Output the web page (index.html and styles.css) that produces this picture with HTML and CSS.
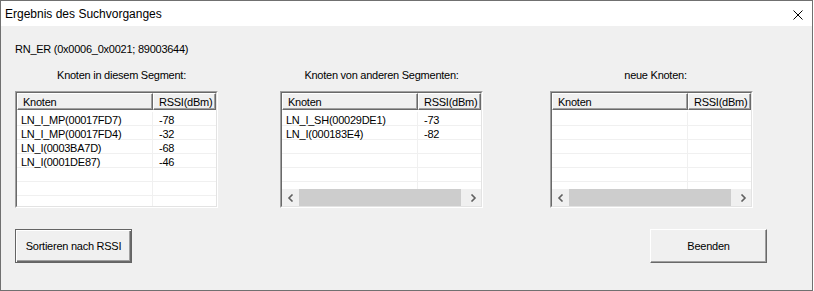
FILE: index.html
```html
<!DOCTYPE html>
<html lang="de">

<head>
    <meta charset="UTF-8">
    <meta name="viewport" content="width=device-width, initial-scale=1.0">
    <title>Ergebnis des Suchvorganges</title>
    <link rel="stylesheet" href="styles.css">
</head>

<body>
    <div class="window">
        <div class="titlebar">
            <div class="title">Ergebnis des Suchvorganges</div>
            <div class="close">
                <svg width="10" height="10" viewBox="0 0 10 10">
                    <path d="M0.5 0.5 L9.5 9.5 M9.5 0.5 L0.5 9.5" stroke="#000" stroke-width="1" fill="none" />
                </svg>
            </div>
        </div>
        <div class="client">
            <div class="device">RN_ER (0x0006_0x0021; 89003644)</div>

            <div class="segments">
                <!-- eigenes Segment -->
                <div class="segment seg-own">
                    <div class="seg-label">Knoten in diesem Segment:</div>
                    <div class="list">
                        <div class="list-inner">
                            <div class="list-head">
                                <div class="hcell col-name">Knoten</div>
                                <div class="hcell col-rssi">RSSI(dBm)</div>
                            </div>
                            <div class="list-body">
                                <div class="row"><div class="cell col-name">LN_I_MP(00017FD7)</div><div class="cell col-rssi">-78</div></div>
                                <div class="row"><div class="cell col-name">LN_I_MP(00017FD4)</div><div class="cell col-rssi">-32</div></div>
                                <div class="row"><div class="cell col-name">LN_I(0003BA7D)</div><div class="cell col-rssi">-68</div></div>
                                <div class="row"><div class="cell col-name">LN_I(0001DE87)</div><div class="cell col-rssi">-46</div></div>
                                <div class="row"><div class="cell col-name"></div><div class="cell col-rssi"></div></div>
                                <div class="row"><div class="cell col-name"></div><div class="cell col-rssi"></div></div>
                                <div class="row"><div class="cell col-name"></div><div class="cell col-rssi"></div></div>
                            </div>
                        </div>
                    </div>
                </div>

                <!-- andere Segmente -->
                <div class="segment seg-other">
                    <div class="seg-label">Knoten von anderen Segmenten:</div>
                    <div class="list">
                        <div class="list-inner">
                            <div class="list-head">
                                <div class="hcell col-name">Knoten</div>
                                <div class="hcell col-rssi">RSSI(dBm)</div>
                            </div>
                            <div class="list-body">
                                <div class="row"><div class="cell col-name">LN_I_SH(00029DE1)</div><div class="cell col-rssi">-73</div></div>
                                <div class="row"><div class="cell col-name">LN_I(000183E4)</div><div class="cell col-rssi">-82</div></div>
                                <div class="row"><div class="cell col-name"></div><div class="cell col-rssi"></div></div>
                                <div class="row"><div class="cell col-name"></div><div class="cell col-rssi"></div></div>
                                <div class="row"><div class="cell col-name"></div><div class="cell col-rssi"></div></div>
                                <div class="row"><div class="cell col-name"></div><div class="cell col-rssi"></div></div>
                            </div>
                            <div class="hscroll">
                                <div class="arrow">
                                    <svg width="8" height="8" viewBox="0 0 8 8"><polyline points="5.5,0.5 2,4 5.5,7.5" stroke="#606060" stroke-width="1.6" fill="none" /></svg>
                                </div>
                                <div class="thumb"></div>
                                <div class="arrow">
                                    <svg width="8" height="8" viewBox="0 0 8 8"><polyline points="2.5,0.5 6,4 2.5,7.5" stroke="#606060" stroke-width="1.6" fill="none" /></svg>
                                </div>
                            </div>
                        </div>
                    </div>
                </div>

                <!-- neue Knoten -->
                <div class="segment seg-new">
                    <div class="seg-label">neue Knoten:</div>
                    <div class="list">
                        <div class="list-inner">
                            <div class="list-head">
                                <div class="hcell col-name">Knoten</div>
                                <div class="hcell col-rssi">RSSI(dBm)</div>
                            </div>
                            <div class="list-body">
                                <div class="row"><div class="cell col-name"></div><div class="cell col-rssi"></div></div>
                                <div class="row"><div class="cell col-name"></div><div class="cell col-rssi"></div></div>
                                <div class="row"><div class="cell col-name"></div><div class="cell col-rssi"></div></div>
                                <div class="row"><div class="cell col-name"></div><div class="cell col-rssi"></div></div>
                                <div class="row"><div class="cell col-name"></div><div class="cell col-rssi"></div></div>
                                <div class="row"><div class="cell col-name"></div><div class="cell col-rssi"></div></div>
                            </div>
                            <div class="hscroll">
                                <div class="arrow">
                                    <svg width="8" height="8" viewBox="0 0 8 8"><polyline points="5.5,0.5 2,4 5.5,7.5" stroke="#606060" stroke-width="1.6" fill="none" /></svg>
                                </div>
                                <div class="thumb"></div>
                                <div class="arrow">
                                    <svg width="8" height="8" viewBox="0 0 8 8"><polyline points="2.5,0.5 6,4 2.5,7.5" stroke="#606060" stroke-width="1.6" fill="none" /></svg>
                                </div>
                            </div>
                        </div>
                    </div>
                </div>
            </div>

            <div class="actions">
                <div class="btn btn-default">Sortieren nach RSSI</div>
                <div class="btn">Beenden</div>
            </div>
        </div>
    </div>
</body>

</html>
```

FILE: styles.css
```css
body {
    font-family: 'Liberation Sans', Arial, sans-serif;
    font-size: 11px;
    letter-spacing: -0.25px;
    color: #000;
    background-color: #ffffff;
    margin: 0;
    padding: 0;
}

.window {
    width: 813px;
    height: 291px;
    box-sizing: border-box;
    border: 1px solid #707070;
    display: flex;
    flex-direction: column;
    background: #f0f0f0;
}

.titlebar {
    height: 25px;
    flex-shrink: 0;
    background: #ffffff;
    display: flex;
    align-items: center;
    justify-content: space-between;
}

.title {
    font-size: 12px;
    letter-spacing: 0;
    padding-left: 4px;
    padding-top: 1px;
}

.close {
    width: 10px;
    height: 10px;
    margin-right: 9px;
    margin-top: 2px;
}

.close svg {
    display: block;
}

.client {
    flex: 1;
    padding: 16px 45px 0 14px;
}

.device {
    line-height: 14px;
}

.segments {
    display: flex;
    margin-top: 12px;
}

.segment {
    width: 203px;
    display: flex;
    flex-direction: column;
    align-items: center;
}

.seg-other {
    margin-left: 62px;
}

.seg-new {
    margin-left: 67px;
}

.seg-label {
    line-height: 14px;
    margin-bottom: 9px;
}

.seg-own .seg-label {
    padding-left: 10px;
}

.seg-new .seg-label {
    padding-left: 8px;
}

/* ListView mit 3D-Rahmen */
.list {
    width: 203px;
    height: 117px;
    box-sizing: border-box;
    border: 1px solid;
    border-color: #a0a0a0 #ffffff #ffffff #a0a0a0;
}

.list-inner {
    height: 100%;
    box-sizing: border-box;
    border: 1px solid;
    border-color: #696969 #e3e3e3 #e3e3e3 #696969;
    background: #ffffff;
    display: flex;
    flex-direction: column;
    overflow: hidden;
}

.list-head {
    display: flex;
    height: 17px;
    flex-shrink: 0;
}

.hcell {
    height: 17px;
    box-sizing: border-box;
    background: #f0f0f0;
    border: 1px solid;
    border-color: #ffffff #696969 #696969 #ffffff;
    box-shadow: inset -1px -1px 0 #a0a0a0;
    padding: 1px 0 0 5px;
    line-height: 14px;
    white-space: nowrap;
}

.hcell.col-name {
    width: 136px;
}

.hcell.col-rssi {
    flex: 1;
}

.list-body {
    flex: 1;
    padding-top: 2px;
    overflow: hidden;
}

.row {
    display: flex;
    height: 14px;
    box-sizing: border-box;
    border-bottom: 1px solid #f0f0f0;
}

.cell {
    padding-top: 2px;
    line-height: 12px;
    white-space: nowrap;
}

.cell.col-name {
    width: 136px;
    box-sizing: border-box;
    border-right: 1px solid #f0f0f0;
    padding-left: 4px;
}

.cell.col-rssi {
    padding-left: 6px;
}

.hscroll {
    height: 17px;
    flex-shrink: 0;
    display: flex;
    background: #f0f0f0;
}

.arrow {
    width: 17px;
    display: flex;
    align-items: center;
    justify-content: center;
}

.arrow svg {
    display: block;
}

.thumb {
    flex: 1;
    margin-right: 3px;
    background: #cdcdcd;
}

.actions {
    display: flex;
    justify-content: space-between;
    margin-top: 21px;
}

.btn {
    width: 117px;
    height: 34px;
    box-sizing: border-box;
    background: #f0f0f0;
    border: 1px solid;
    border-color: #ffffff #696969 #696969 #ffffff;
    box-shadow: inset -1px -1px 0 #a0a0a0;
    display: flex;
    align-items: center;
    justify-content: center;
}

.btn-default {
    border: 1px solid #646464;
    box-shadow: inset 1px 1px 0 #ffffff, inset -1px -1px 0 #696969, inset -2px -2px 0 #a0a0a0;
}
```
